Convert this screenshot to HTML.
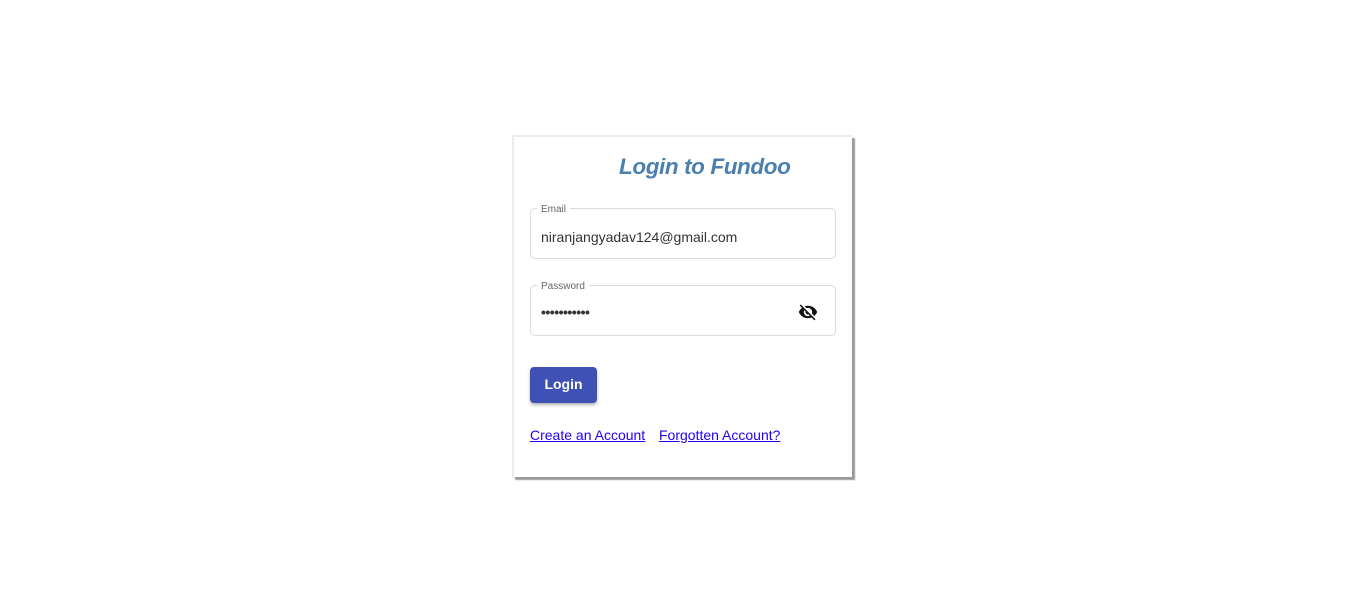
<!DOCTYPE html>
<html><head><meta charset="utf-8"><style>
html,body{margin:0;padding:0;background:#fff;width:1366px;height:613px;overflow:hidden;font-family:"Liberation Sans",Arial,sans-serif;}
.card{position:absolute;left:512px;top:135px;width:338px;height:340px;background:#fff;border:2px solid #ececec;border-right:none;border-bottom:none;box-shadow:3px 3px 1px #9a9a9a;}
.title{position:absolute;left:619px;top:154px;font-size:22.5px;font-style:italic;font-weight:bold;color:#4a7fb0;letter-spacing:-0.4px;}
.field{position:absolute;left:530px;width:304px;height:49px;border:1px solid #dcdcdc;border-radius:5px;}
.label{position:absolute;left:6px;top:-5px;background:#fff;padding:0 4px;font-size:10px;color:#666;}
.val{position:absolute;left:10px;top:20px;font-size:14px;color:#333;}
.btn{position:absolute;left:530px;top:367px;width:67px;height:36px;background:#3f51b5;border-radius:4px;color:#fff;font-weight:bold;font-size:14px;text-align:center;line-height:35px;box-shadow:0 2px 3px rgba(0,0,0,.3);}
a{position:absolute;top:427px;font-size:14px;color:#2200ee;text-decoration:underline;}
</style></head><body>
<div class="card"></div>
<div class="title">Login to Fundoo</div>
<div class="field" style="top:208px"><span class="label">Email</span><span class="val">niranjangyadav124@gmail.com</span></div>
<div class="field" style="top:285px"><span class="label">Password</span><span class="val" style="top:18px;font-weight:bold;letter-spacing:-0.5px">•••••••••••</span>
<svg style="position:absolute;left:266px;top:16px" width="22" height="20" viewBox="0 0 24 24"><path fill="#111" d="M12 7c2.76 0 5 2.24 5 5 0 .65-.13 1.26-.36 1.830l2.92 2.92c1.51-1.26 2.7-2.89 3.43-4.75-1.73-4.39-6-7.5-11-7.5-1.4 0-2.74.25-3.98.7l2.16 2.16C10.74 7.13 11.35 7 12 7zM2 4.27l2.28 2.28.46.46C3.08 8.3 1.78 10.020 1 12c1.73 4.39 6 7.5 11 7.5 1.55 0 3.03-.3 4.38-.84l.42.42L19.73 22 21 20.73 3.27 3 2 4.27zM7.53 9.8l1.55 1.55c-.05.21-.08.43-.08.65 0 1.66 1.34 3 3 3 .22 0 .44-.03.65-.08l1.55 1.55c-.67.33-1.41.53-2.2.53-2.76 0-5-2.24-5-5 0-.79.2-1.53.53-2.2z"/></svg></div>
<div class="btn">Login</div>
<a style="left:530px">Create an Account</a>
<a style="left:659px">Forgotten Account?</a>
</body></html>
